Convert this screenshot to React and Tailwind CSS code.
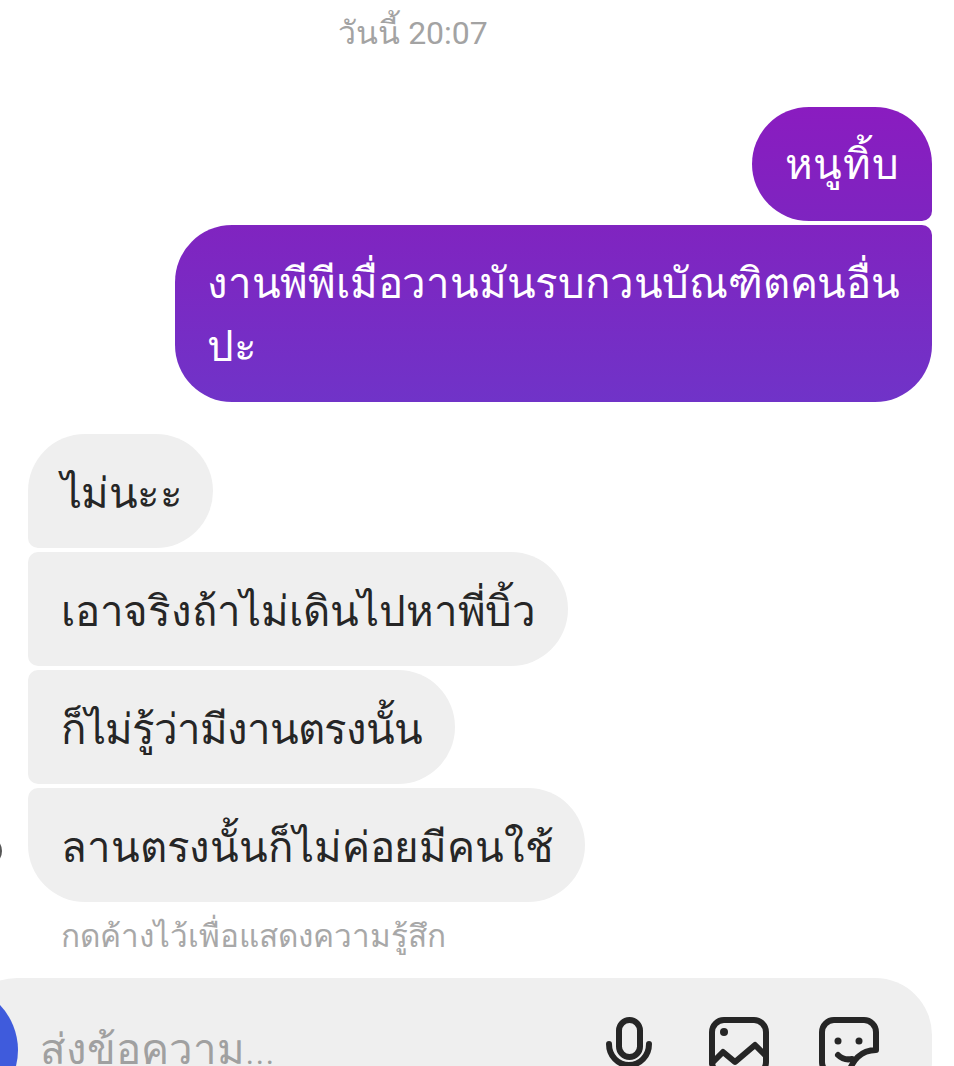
function Left({ children, className }) {
  return <div className={`self-start shrink-0 h-[114px] bg-[#efefef] text-[#262626] pl-[33px] pt-1 flex items-center whitespace-nowrap ${className}`}>{children}</div>;
}
export default function App() {
  return (
    <div className="w-[954px] h-[1066px] overflow-hidden bg-white relative flex flex-col font-['Roboto','Noto_Sans',sans-serif] text-[42px] font-light">
      <div className="h-[66px] shrink-0 w-[826px] flex items-center justify-center text-[32px] text-[#a3a3a3] font-normal">วันนี้ 20:07</div>
      <div className="flex flex-col shrink-0 gap-1 mt-[41px] pl-7 pr-[22px]">
        <div className="self-end h-[114px] w-[180px] rounded-[57px] rounded-br-[10px] bg-[linear-gradient(180deg,#8a1cc0,#7e24c0)] text-white flex items-center justify-center whitespace-nowrap tracking-[0.6px]">หนูทิ้บ</div>
        <div className="self-end h-[177px] w-[757px] rounded-[57px] rounded-tr-[10px] bg-[linear-gradient(180deg,#8024c0,#7033c8)] text-white px-[32px] pt-[27px] pb-[25px] leading-[63px] whitespace-nowrap tracking-[-0.2px]">งานพีพีเมื่อวานมันรบกวนบัณฑิตคนอื่น<br />ปะ</div>
        <div className="h-6" />
        <Left className="w-[185px] rounded-[57px] rounded-bl-[10px] tracking-[-0.6px]">ไม่นะะ</Left>
        <Left className="w-[540px] rounded-[57px] rounded-l-[10px] tracking-[-0.2px]">เอาจริงถ้าไม่เดินไปหาพี่บิ้ว</Left>
        <Left className="w-[427px] rounded-[57px] rounded-l-[10px] tracking-[-1px]">ก็ไม่รู้ว่ามีงานตรงนั้น</Left>
        <Left className="w-[557px] rounded-[57px] rounded-tl-[10px] tracking-[-0.12px]">ลานตรงนั้นก็ไม่ค่อยมีคนใช้</Left>
      </div>
      <div className="absolute left-[-28px] top-[836px] w-[30px] h-[30px] rounded-full border-2 border-[#555]" />
      <div className="mt-[16px] shrink-0 pl-[61px] text-[31.5px] leading-[38px] text-[#a8a8a8] whitespace-nowrap">กดค้างไว้เพื่อแสดงความรู้สึก</div>
      <div className="mt-[22px] ml-[-40px] w-[972px] h-[140px] shrink-0 bg-[#efefef] rounded-[57px] flex items-start relative pl-[80px] pr-[53px]">
        <div className="absolute left-[-72px] top-[7px] w-[130px] h-[130px] rounded-full bg-[#3f5bdc]" />
        <div className="mt-[47px] text-[42px] leading-[50px] text-[#a0a0a0] whitespace-nowrap">ส่งข้อความ...</div>
        <div className="ml-auto mt-[39px] flex text-[#262626]">
          <svg width="46" height="60" viewBox="0 0 46 60" fill="none" stroke="currentColor" strokeWidth="6" strokeLinecap="round" strokeLinejoin="round">
            <rect x="13" y="3" width="21" height="37" rx="10.5" />
            <path d="M3 27c0 12 9 21 20 21s20-9 20-21M23 48v10" />
          </svg>
          <svg className="ml-[57px]" width="60" height="60" viewBox="0 0 60 60" fill="none" stroke="currentColor" strokeWidth="6" strokeLinecap="round" strokeLinejoin="round">
            <rect x="3" y="3" width="54" height="54" rx="12" />
            <circle cx="15" cy="15" r="4" fill="currentColor" stroke="none" />
            <path d="M3 46l11-11 12 10 20-17 11 11" />
          </svg>
          <svg className="ml-[50px]" width="60" height="60" viewBox="0 0 60 60" fill="none" stroke="currentColor" strokeWidth="6" strokeLinecap="round" strokeLinejoin="round">
            <path d="M57 33V15A12 12 0 0 0 45 3H15A12 12 0 0 0 3 15v30a12 12 0 0 0 12 12h15C32 44 42 33 57 33z" />
            <circle cx="19" cy="24" r="3.5" fill="currentColor" stroke="none" />
            <circle cx="40" cy="24" r="3.5" fill="currentColor" stroke="none" />
            <path d="M19 38c4 4 9 5 14 4" />
          </svg>
        </div>
      </div>
    </div>
  );
}
